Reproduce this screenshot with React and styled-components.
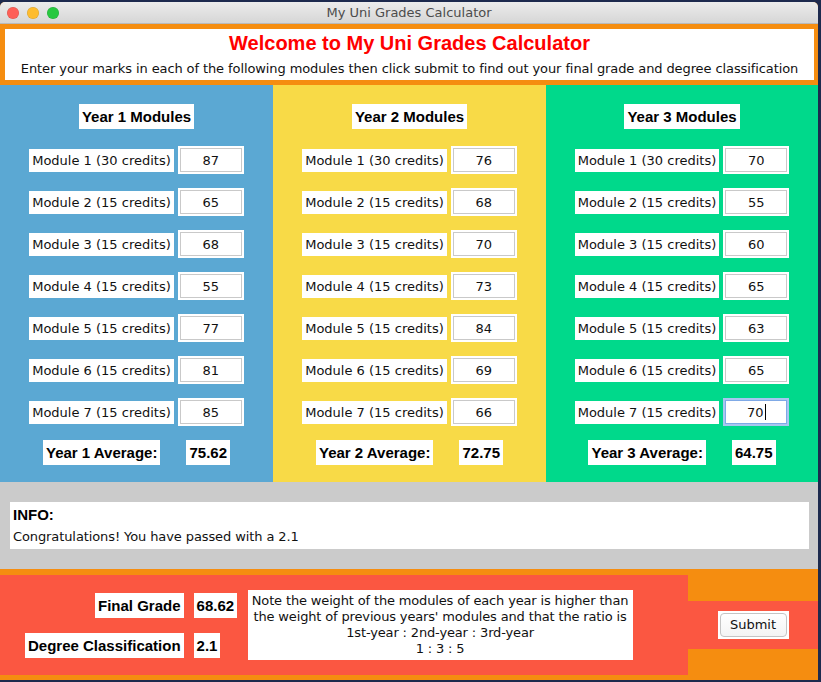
import React from 'react'
import styled, { createGlobalStyle } from 'styled-components'

const GlobalStyle = createGlobalStyle`
  html, body {
    margin: 0;
    padding: 0;
    background: #1d2a4e;
  }
  body {
    font-family: 'DejaVu Sans', sans-serif;
  }
`

const years = [
  { year: 1, color: '#5ba8d3', marks: [87, 65, 68, 55, 77, 81, 85], average: '75.62' },
  { year: 2, color: '#f8da47', marks: [76, 68, 70, 73, 84, 69, 66], average: '72.75' },
  { year: 3, color: '#00d98b', marks: [70, 55, 60, 65, 63, 65, 70], average: '64.75' },
]

const Window = styled.div`
  width: 818px;
  height: 678px;
  margin-top: 2px;
  display: flex;
  flex-direction: column;
  background: #f58d10;
  border-radius: 5px 5px 0 0;
  overflow: hidden;
`
const TitleBar = styled.div`
  position: relative;
  height: 21px;
  flex-shrink: 0;
  display: flex;
  align-items: center;
  justify-content: center;
  background: linear-gradient(#ececec, #d6d6d6);
  border-bottom: 1px solid #b9b9b9;
  font-size: 13px;
  color: #4c4c4c;
`
const Lights = styled.div`
  position: absolute;
  left: 7px;
  top: 5px;
  display: flex;
  gap: 8px;
`
const Light = styled.span`
  width: 12px;
  height: 12px;
  border-radius: 50%;
  background: ${(props) => props.color};
  box-shadow: inset 0 0 0 0.5px rgba(0, 0, 0, 0.15);
`
const Header = styled.div`
  padding: 5px 4px 5px 5px;
`
const HeaderBox = styled.div`
  height: 51px;
  display: flex;
  flex-direction: column;
  align-items: center;
  padding-top: 2px;
  box-sizing: border-box;
  background: #fff;
`
const Title = styled.h1`
  margin: 0;
  font-family: 'Liberation Sans', Arial, sans-serif;
  font-size: 20px;
  line-height: 24px;
  font-weight: 700;
  color: #ff0000;
`
const Subtitle = styled.p`
  margin: 6px 0 0;
  font-size: 13px;
  line-height: 16px;
  letter-spacing: -0.1px;
  color: #111;
`
const Columns = styled.div`
  display: grid;
  grid-template-columns: 273px 273px 272px;
`
const Column = styled.div`
  display: flex;
  flex-direction: column;
  align-items: center;
  padding: 19px 0 17px;
  background: ${(props) => props.color};
`
const BoldBox = styled.div`
  height: 25px;
  padding: 0 3px;
  display: flex;
  align-items: center;
  background: #fff;
  font-family: 'Liberation Sans', Arial, sans-serif;
  font-size: 15px;
  font-weight: 700;
  color: #000;
  white-space: nowrap;
`
const Rows = styled.div`
  display: flex;
  flex-direction: column;
  gap: 14px;
  margin: 17px 0 14px;
`
const Row = styled.div`
  display: flex;
  align-items: center;
  gap: 4px;
`
const Label = styled.div`
  height: 23px;
  padding: 0 3px;
  display: flex;
  align-items: center;
  background: #fff;
  font-size: 13px;
  color: #111;
  white-space: nowrap;
`
const Field = styled.div`
  width: 66px;
  height: 28px;
  box-sizing: border-box;
  padding: 2px;
  background: #fff;
`
const FieldInner = styled.div`
  height: 100%;
  box-sizing: border-box;
  display: flex;
  align-items: center;
  justify-content: center;
  border: 1px solid ${(props) => (props.focused ? '#7fa9e6' : '#c9c9c9')};
  box-shadow: ${(props) => (props.focused ? '0 0 0 2px #a9c6f0' : 'none')};
  font-size: 13px;
  color: #111;
`
const Caret = styled.span`
  width: 1px;
  height: 16px;
  margin-left: 1px;
  background: #000;
`
const AverageRow = styled.div`
  display: flex;
  gap: 26px;
`
const Info = styled.div`
  padding: 20px 9px 20px 10px;
  background: #cbcbcb;
`
const InfoBox = styled.div`
  height: 47px;
  box-sizing: border-box;
  padding: 4px 3px 0;
  background: #fff;
`
const InfoTitle = styled.div`
  font-family: 'Liberation Sans', Arial, sans-serif;
  font-size: 15px;
  font-weight: 700;
  line-height: 18px;
  color: #000;
`
const InfoText = styled.div`
  margin-top: 5px;
  font-size: 13px;
  line-height: 16px;
  letter-spacing: -0.1px;
  color: #111;
`
const Bottom = styled.div`
  flex: 1;
  display: flex;
  align-items: center;
`
const Results = styled.div`
  width: 688px;
  height: 100px;
  margin-top: 5px;
  margin-bottom: 4px;
  box-sizing: border-box;
  padding-left: 25px;
  display: flex;
  align-items: center;
  gap: 10px;
  background: #fb5741;
`
const ResultGrid = styled.div`
  display: grid;
  grid-template-columns: auto 44px;
  column-gap: 10px;
  row-gap: 15px;
  justify-items: end;
  > :nth-child(2n) {
    justify-self: start;
  }
`
const Note = styled.div`
  width: 385px;
  height: 70px;
  box-sizing: border-box;
  padding-top: 3px;
  background: #fff;
  font-size: 13px;
  line-height: 16px;
  letter-spacing: -0.15px;
  white-space: nowrap;
  text-align: center;
  color: #111;
`
const SubmitArea = styled.div`
  flex: 1;
  height: 48px;
  display: flex;
  align-items: center;
  justify-content: center;
  background: #fb5741;
`
const SubmitWrap = styled.div`
  padding: 2px;
  background: #fff;
`
const SubmitButton = styled.button`
  width: 67px;
  height: 24px;
  padding: 0;
  border: 1px solid #c4c4c4;
  border-radius: 4px;
  background: linear-gradient(#fff, #f4f4f4);
  font-family: 'DejaVu Sans', sans-serif;
  font-size: 13px;
  color: #111;
`

function YearColumn({ year, color, marks, average, focusLast }) {
  return (
    <Column color={color}>
      <BoldBox>Year {year} Modules</BoldBox>
      <Rows>
        {marks.map((mark, i) => {
          const focused = focusLast && i === marks.length - 1
          return (
            <Row key={i}>
              <Label>
                Module {i + 1} ({i === 0 ? 30 : 15} credits)
              </Label>
              <Field>
                <FieldInner focused={focused}>
                  {mark}
                  {focused && <Caret />}
                </FieldInner>
              </Field>
            </Row>
          )
        })}
      </Rows>
      <AverageRow>
        <BoldBox>Year {year} Average:</BoldBox>
        <BoldBox>{average}</BoldBox>
      </AverageRow>
    </Column>
  )
}

export default function App() {
  return (
    <>
      <GlobalStyle />
      <Window>
        <TitleBar>
          <Lights>
            <Light color="#fe5f57" />
            <Light color="#febc2e" />
            <Light color="#28c840" />
          </Lights>
          My Uni Grades Calculator
        </TitleBar>
        <Header>
          <HeaderBox>
            <Title>Welcome to My Uni Grades Calculator</Title>
            <Subtitle>
              Enter your marks in each of the following modules then click submit to find out your final grade and degree classification
            </Subtitle>
          </HeaderBox>
        </Header>
        <Columns>
          {years.map((y) => (
            <YearColumn key={y.year} {...y} focusLast={y.year === 3} />
          ))}
        </Columns>
        <Info>
          <InfoBox>
            <InfoTitle>INFO:</InfoTitle>
            <InfoText>Congratulations! You have passed with a 2.1</InfoText>
          </InfoBox>
        </Info>
        <Bottom>
          <Results>
            <ResultGrid>
              <BoldBox>Final Grade</BoldBox>
              <BoldBox>68.62</BoldBox>
              <BoldBox>Degree Classification</BoldBox>
              <BoldBox>2.1</BoldBox>
            </ResultGrid>
            <Note>
              Note the weight of the modules of each year is higher than
              <br />
              the weight of previous years' modules and that the ratio is
              <br />
              1st-year : 2nd-year : 3rd-year
              <br />1 : 3 : 5
            </Note>
          </Results>
          <SubmitArea>
            <SubmitWrap>
              <SubmitButton>Submit</SubmitButton>
            </SubmitWrap>
          </SubmitArea>
        </Bottom>
      </Window>
    </>
  )
}
